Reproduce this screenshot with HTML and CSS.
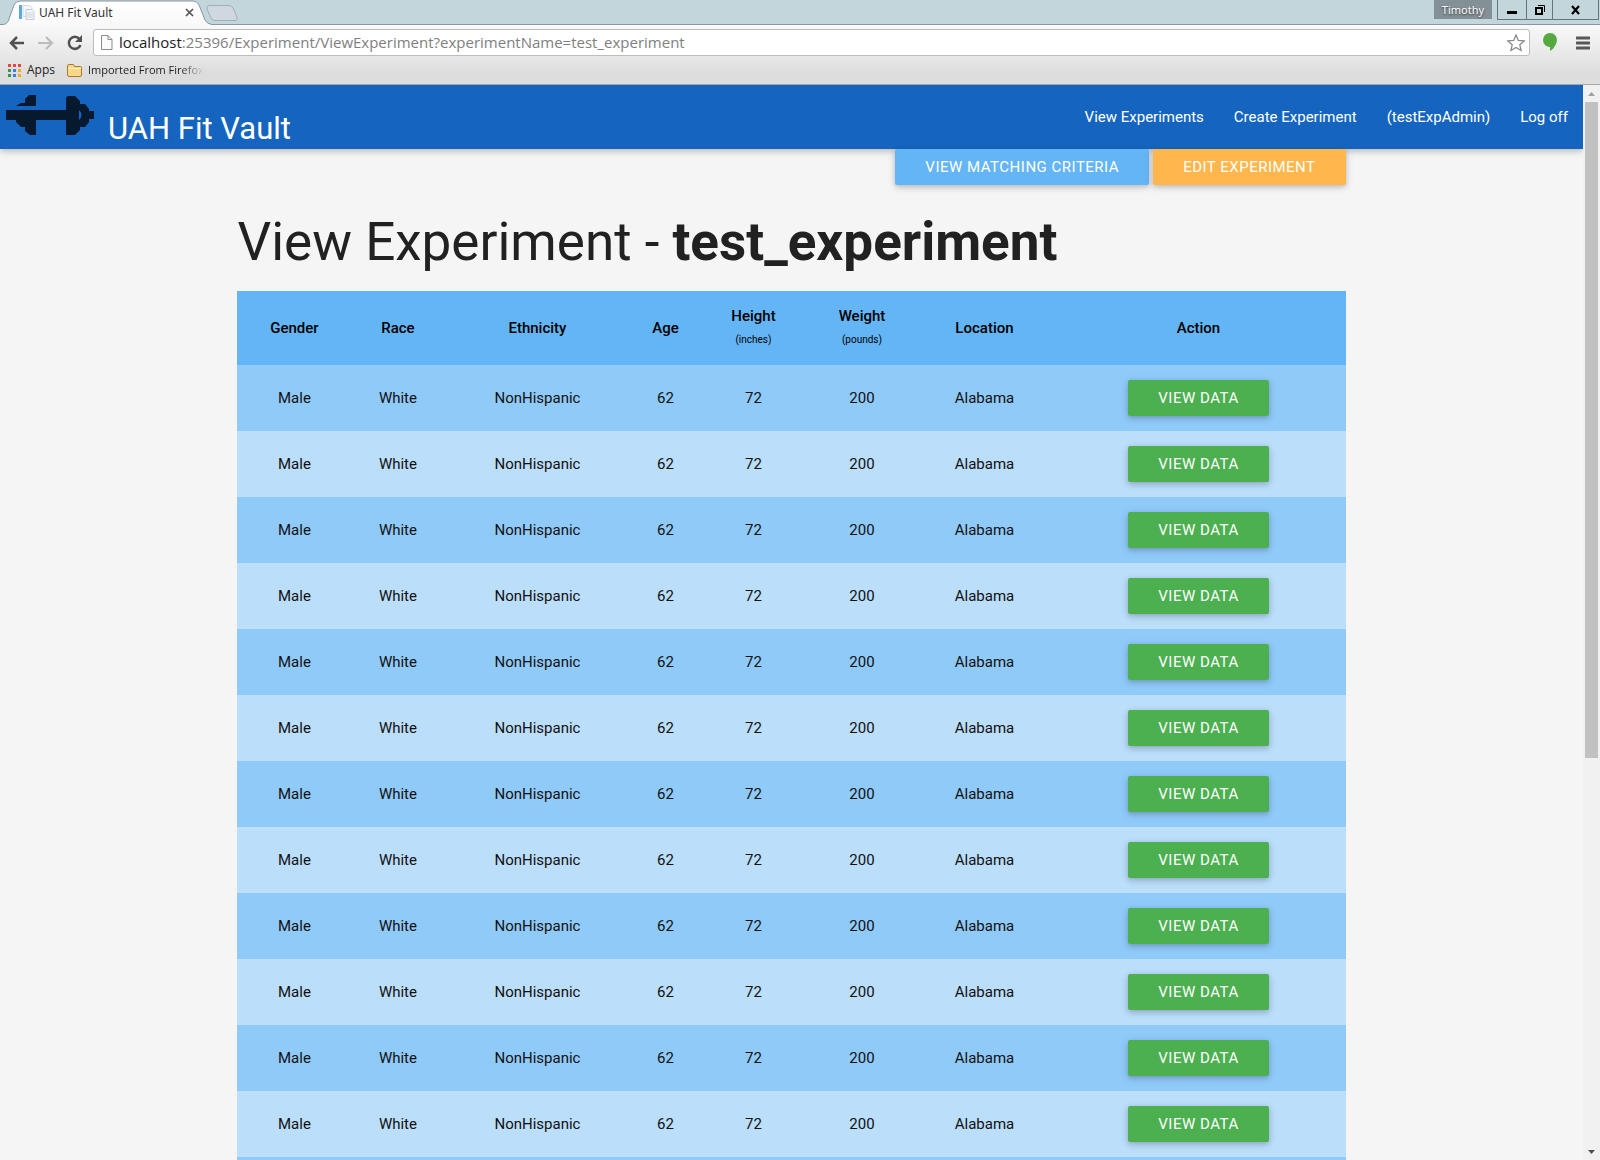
FILE: index.html
```html
<!DOCTYPE html>
<html lang="en">
<head>
<meta charset="utf-8">
<title>UAH Fit Vault</title>
<link rel="stylesheet" href="styles.css">
</head>
<body>
<div class="tabstrip">
  <svg class="tab-shapes" width="240" height="25" viewBox="0 0 240 25" aria-hidden="true">
    <defs><linearGradient id="tabfill" x2="0" y2="1"><stop offset="0" stop-color="#fff"/><stop offset="1" stop-color="#f9f9f9"/></linearGradient></defs>
    <path d="M0 24.5H3C7 24 8 22 9 19L14 5Q16 1 20 1H193Q197 1 199 5L205 20Q207 24 212 24.5V25H0Z" fill="url(#tabfill)"/>
    <path d="M0 24.5H3C7 24 8 22 9 19L14 5Q16 1 20 1H193Q197 1 199 5L205 20Q207 24 212 24.5H240" fill="none" stroke="#89979c"/>
    <path d="M209 5.500H229Q232 5.500 233 8L237 17Q238 20.500 235 20.500H215Q212 20.500 211 18L207 9Q206 5.500 209 5.500Z" fill="#d0d8df" stroke="#a1aeb5"/>
  </svg>
  <div class="tab">
    <svg width="16" height="16" viewBox="0 0 16 16" aria-hidden="true"><path d="M0 1h3v14H0z" fill="#5babd9"/><path d="M4 1.500h7l2 2V12.500H4z" fill="#f4f7fa" stroke="#d3dbe2"/><path d="M7 5.500h6l2 2V15.500H7z" fill="#f4f7fa" stroke="#c3cdd6"/><path d="M8 9h6M8 11h6M8 13h6" stroke="#ccd5dd"/></svg>
    <span class="tab-title">UAH Fit Vault</span>
    <button class="icon-btn" aria-label="Close tab"><svg width="10" height="10" viewBox="0 0 10 10"><path d="M1 2l7 7M8 2L1 9" stroke="#555" stroke-width="1.700"/></svg></button>
  </div>
  <div class="window-controls">
    <button class="profile">Timothy</button>
    <div class="window-buttons">
      <button class="win min" aria-label="Minimize"><svg width="10" height="10"><path d="M0 6h10v3H0z"/></svg></button>
      <button class="win" aria-label="Restore"><svg width="10" height="10" fill="none" stroke="#000"><path d="M1 3h6v6H1z" stroke-width="2"/><path d="M3 .5h6.500V7"/></svg></button>
      <button class="win close" aria-label="Close"><svg width="10" height="10"><path d="M1 1l7 8M8 1L1 9" stroke="#000" stroke-width="2.200"/></svg></button>
    </div>
  </div>
</div>
<div class="toolbar">
  <div class="address-row">
    <button class="icon-btn" aria-label="Back"><svg width="16" height="14" fill="none" stroke="#505050" stroke-width="2.500"><path d="M15 7H2M8 1L2 7l6 6"/></svg></button>
    <button class="icon-btn" aria-label="Forward"><svg width="16" height="14" fill="none" stroke="#bcbcbc" stroke-width="2.200"><path d="M0 7h13M8 1l6 6-6 6"/></svg></button>
    <button class="icon-btn" aria-label="Reload"><svg width="16" height="16"><path d="M12.500 4A6 6 0 1 0 13.500 10" fill="none" stroke="#505050" stroke-width="2.500"/><path d="M15 0v7H8z" fill="#505050"/></svg></button>
    <div class="omnibox">
      <svg width="12" height="15" fill="#fafafa" stroke="#8b8b8b"><path d="M.5.5h6.500l4 4v10H.5zM7 .5v4h4"/></svg>
      <span class="url">localhost<span class="path">:25396/Experiment/ViewExperiment?experimentName=test_experiment</span></span>
      <button class="icon-btn" aria-label="Bookmark this page"><svg width="18" height="18" viewBox="0 0 18 18"><path d="M9 1l2.300 5.400 5.900.5-4.400 3.900 1.300 5.700L9 13.500l-5.100 3 1.300-5.700L.8 6.900l5.900-.5z" fill="#fff" stroke="#8a8a8a" stroke-width="1.300"/></svg></button>
    </div>
    <button class="icon-btn" aria-label="Hangouts"><svg width="14" height="19"><circle cx="7" cy="7" r="7" fill="#54a93f"/><path d="M7 12v6q5-3 6-8z" fill="#54a93f"/></svg></button>
    <button class="icon-btn menu" aria-label="Menu"><svg width="14" height="14"><path d="M1 2h12M1 7h12M1 12h12" stroke="#585858" stroke-width="3" stroke-linecap="round"/></svg></button>
  </div>
  <div class="bookmarks">
    <a href="#" class="bookmark"><svg width="13" height="13"><path fill="#e8453c" d="M0 0h3v3H0zM5 0h3v3H5zM10 0h3v3h-3z"/><path fill="#2f9a58" d="M0 5h3v3H0zM0 10h3v3H0z"/><path fill="#3e7de8" d="M5 5h3v3H5zM5 10h3v3H5z"/><path fill="#f1ab1c" d="M10 5h3v3h-3zM10 10h3v3h-3z"/></svg><span>Apps</span></a>
    <a href="#" class="bookmark folder"><svg width="15" height="13"><path d="M.5 11V2Q.5.500 2 .5h4Q7 .5 7.500 2.500h6q1 0 1 1V11q0 1.500-1.500 1.500H2Q.5 12.500.5 11z" fill="#fbd887" stroke="#ad7a2d"/><path d="M1 4.500h13" stroke="#fff0c4"/></svg><span class="fade">Imported From Firefox</span></a>
  </div>
</div>
<div class="viewport">
  <div class="page">
    <nav class="navbar">
      <a href="#" class="brand">
        <svg width="88" height="40" viewBox="0 0 88 40" aria-hidden="true"><path fill="#06192f" d="M0 15H60V4Q60 1 63 1H69L74 6V9H79L83 14V16H88V24H83V27L79 32H74V35L69 40H60V25H30V40H24L19 36V32H15L10 27V25H0Z"/><path fill="#06192f" d="M10 11L15 8H19V4L23 0H30V11Z"/><path fill="#1565c0" d="M73 15q5 5 0 10z"/></svg>
        <span>UAH Fit Vault</span>
      </a>
      <div class="links"><a href="#">View Experiments</a><a href="#">Create Experiment</a><a href="#">(testExpAdmin)</a><a href="#">Log off</a></div>
    </nav>
    <main class="container">
      <div class="actions"><button class="btn blue">VIEW MATCHING CRITERIA</button><button class="btn orange">EDIT EXPERIMENT</button></div>
      <h1>View Experiment - <b>test_experiment</b></h1>
      <table>
        <colgroup><col class="c-gender"><col class="c-race"><col class="c-ethnicity"><col class="c-age"><col class="c-height"><col class="c-weight"><col class="c-location"><col class="c-action"></colgroup>
        <thead><tr><th>Gender</th><th>Race</th><th>Ethnicity</th><th>Age</th><th>Height<small>(inches)</small></th><th>Weight<small>(pounds)</small></th><th>Location</th><th>Action</th></tr></thead>
        <tbody>
          <tr><td>Male</td><td>White</td><td>NonHispanic</td><td>62</td><td>72</td><td>200</td><td>Alabama</td><td><button class="btn green">VIEW DATA</button></td></tr>
          <tr><td>Male</td><td>White</td><td>NonHispanic</td><td>62</td><td>72</td><td>200</td><td>Alabama</td><td><button class="btn green">VIEW DATA</button></td></tr>
          <tr><td>Male</td><td>White</td><td>NonHispanic</td><td>62</td><td>72</td><td>200</td><td>Alabama</td><td><button class="btn green">VIEW DATA</button></td></tr>
          <tr><td>Male</td><td>White</td><td>NonHispanic</td><td>62</td><td>72</td><td>200</td><td>Alabama</td><td><button class="btn green">VIEW DATA</button></td></tr>
          <tr><td>Male</td><td>White</td><td>NonHispanic</td><td>62</td><td>72</td><td>200</td><td>Alabama</td><td><button class="btn green">VIEW DATA</button></td></tr>
          <tr><td>Male</td><td>White</td><td>NonHispanic</td><td>62</td><td>72</td><td>200</td><td>Alabama</td><td><button class="btn green">VIEW DATA</button></td></tr>
          <tr><td>Male</td><td>White</td><td>NonHispanic</td><td>62</td><td>72</td><td>200</td><td>Alabama</td><td><button class="btn green">VIEW DATA</button></td></tr>
          <tr><td>Male</td><td>White</td><td>NonHispanic</td><td>62</td><td>72</td><td>200</td><td>Alabama</td><td><button class="btn green">VIEW DATA</button></td></tr>
          <tr><td>Male</td><td>White</td><td>NonHispanic</td><td>62</td><td>72</td><td>200</td><td>Alabama</td><td><button class="btn green">VIEW DATA</button></td></tr>
          <tr><td>Male</td><td>White</td><td>NonHispanic</td><td>62</td><td>72</td><td>200</td><td>Alabama</td><td><button class="btn green">VIEW DATA</button></td></tr>
          <tr><td>Male</td><td>White</td><td>NonHispanic</td><td>62</td><td>72</td><td>200</td><td>Alabama</td><td><button class="btn green">VIEW DATA</button></td></tr>
          <tr><td>Male</td><td>White</td><td>NonHispanic</td><td>62</td><td>72</td><td>200</td><td>Alabama</td><td><button class="btn green">VIEW DATA</button></td></tr>
          <tr><td colspan="8"></td></tr>
        </tbody>
      </table>
    </main>
  </div>
  <div class="scrollbar" aria-hidden="true">
    <svg width="17" height="17"><path d="M5 11l3.500-4 3.500 4z" fill="#a0a0a0"/></svg>
    <div class="track"><div class="thumb"></div></div>
    <svg width="17" height="17"><path d="M5 7h7l-3.500 4z" fill="#505050"/></svg>
  </div>
</div>
</body>
</html>
```
FILE: styles.css
```css
* { box-sizing: border-box; }
body {
  margin: 0;
  height: 100vh;
  display: flex;
  flex-direction: column;
  overflow: hidden;
  background: #f5f5f5;
  font-family: Roboto, sans-serif;
  font-size: 15px;
}
a { color: inherit; text-decoration: none; }
button { font: inherit; border: 0; margin: 0; padding: 0; }
svg { display: block; flex: none; }
.icon-btn { display: flex; background: none; }

/* window frame */
.tabstrip {
  position: relative;
  display: flex;
  justify-content: space-between;
  height: 25px;
  background: #c3d6dc;
  border-bottom: 1px solid #89979c;
  font-family: "Noto Sans", sans-serif;
  font-size: 11px;
}
.tab-shapes { position: absolute; left: 0; top: 0; }
.tab {
  position: relative;
  display: flex;
  align-items: center;
  gap: 4px;
  width: 195px;
  padding-left: 19px;
}
.tab-title { flex: 1; color: #333; font-size: 12px; }
.window-controls { display: flex; align-items: flex-start; gap: 5px; padding-right: 1px; }
.profile {
  width: 58px;
  height: 19px;
  background: #839096;
  color: #fff;
  text-shadow: 0 1px 2px #333;
}
.window-buttons { display: flex; height: 20px; border: 1px solid #68757a; border-top: 0; }
.win { display: grid; place-items: center; width: 26px; background: none; }
.win + .win { border-left: 1px solid #68757a; }
.win.min { width: 28px; }
.win.close { width: 46px; }

.toolbar {
  height: 60px;
  flex: none;
  background: linear-gradient(#f9f9f9, #dcdcdc 85%, #dedede);
  border-bottom: 1px solid #a5a5a5;
}
.address-row { display: flex; align-items: center; gap: 13px; padding: 4px 10px 0 9px; }
.omnibox {
  flex: 1;
  display: flex;
  align-items: center;
  gap: 6px;
  height: 27px;
  margin-left: -3px;
  padding: 0 4px 0 7px;
  background: #fff;
  border: 1px solid #bcbcbc;
  border-radius: 3px;
}
.url { flex: 1; font: 15px/20px "Open Sans", sans-serif; padding-bottom: 1px; color: #222; }
.path { color: #808080; }
.menu { margin-left: 6px; }
.bookmarks { display: flex; gap: 12px; padding: 5px 8px 0; font: 12px/18px "Open Sans", sans-serif; color: #222; }
.bookmark { display: flex; align-items: center; gap: 6px; }
.folder { font-size: 11px; }
.fade {
  white-space: nowrap;
  mask-image: linear-gradient(90deg, #000 80%, transparent);
}

/* page */
.viewport { flex: 1; min-height: 0; display: flex; }
.page { flex: 1; overflow: hidden; }
.navbar {
  position: relative;
  display: flex;
  justify-content: space-between;
  height: 64px;
  background: #1565c0;
  color: #fff;
  box-shadow: 0 2px 5px rgba(0, 0, 0, .16), 0 2px 10px rgba(0, 0, 0, .12);
}
.brand { display: flex; gap: 14px; padding: 10px 6px; font-size: 31px; line-height: 68px; }
.links { display: flex; line-height: 64px; }
.links a { padding: 0 15px; }
.container { width: 70%; margin: 0 auto; }
.actions { position: relative; display: flex; justify-content: flex-end; gap: 4px; }
.btn {
  height: 36px;
  padding: 0 30px;
  border-radius: 2px;
  color: #fff;
  font-size: 15px;
  letter-spacing: .5px;
  box-shadow: 0 2px 5px rgba(0, 0, 0, .16), 0 2px 10px rgba(0, 0, 0, .12);
}
.blue { background: #64b5f6; }
.orange { background: #ffb74d; }
.green { background: #4caf50; }
h1 { margin: 28px 0 20px; font-size: 53px; line-height: 58px; font-weight: 400; color: #212121; }
h1 b { font-weight: 700; }
table { width: 100%; table-layout: fixed; border-collapse: collapse; text-align: center; color: #111; }
th { height: 74px; padding: 0; font-weight: 500; line-height: 22px; background: #64b5f6; color: #000; }
th small { display: block; padding-top: 2px; font-size: 10px; font-weight: 400; line-height: 22px; }
td { height: 66px; padding: 0; }
tbody tr:nth-child(odd) { background: #90caf9; }
tbody tr:nth-child(even) { background: #bbdefb; }
.c-gender { width: 114px; }
.c-race { width: 93px; }
.c-ethnicity { width: 186px; }
.c-age { width: 70px; }
.c-height { width: 106px; }
.c-weight { width: 111px; }
.c-location { width: 134px; }
.c-action { width: 294px; }

.scrollbar { display: flex; flex-direction: column; width: 17px; background: #f1f1f1; }
.track { flex: 1; padding: 0 2px; }
.thumb { height: 63%; background: #c1c1c1; }
```
